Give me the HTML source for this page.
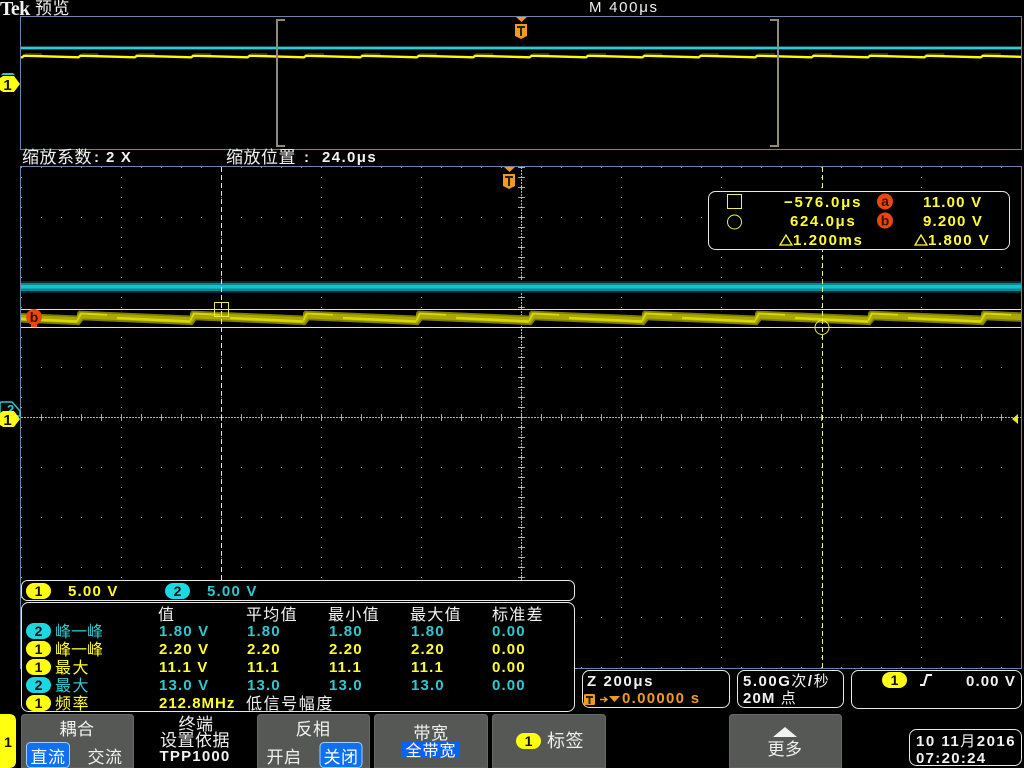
<!DOCTYPE html>
<html><head><meta charset="utf-8"><style>
html,body{margin:0;padding:0;background:#000;width:1024px;height:768px;overflow:hidden}
svg{display:block;position:absolute;left:0;top:0}
text{font-family:"Liberation Sans","WenQuanYi Zen Hei","Noto Sans CJK SC",sans-serif;font-size:15px;font-weight:bold;letter-spacing:1.15px;white-space:pre}
.w{fill:#f2f2f2}.y{fill:#ffff30}.c{fill:#30c8d0}.o{fill:#f09a20}
.z{font-size:16px;letter-spacing:0.5px;font-weight:normal}
.m{font-size:17px;letter-spacing:0.5px;fill:#f0f0f0;font-weight:normal}
.n{font-size:14px;font-weight:bold;fill:#111;letter-spacing:0;text-anchor:middle}
.p{fill:#000;stroke:#e8e8e8;stroke-width:1}
.btn{fill:#565856;stroke:#686a68;stroke-width:1}
</style></head><body>
<svg width="1024" height="768" viewBox="0 0 1024 768" xmlns="http://www.w3.org/2000/svg">
<defs>
<pattern id="rowd" patternUnits="userSpaceOnUse" x="21" y="167" width="20" height="50"><rect width="1" height="1" fill="#a0a0a0"/></pattern>
<pattern id="cold" patternUnits="userSpaceOnUse" x="21" y="167" width="100" height="10"><rect width="1" height="1" fill="#a0a0a0"/></pattern>
<pattern id="cenh" patternUnits="userSpaceOnUse" x="21" y="414" width="20" height="7"><rect x="0" width="1" height="7" fill="#a8a8a8"/></pattern>
<pattern id="cenv" patternUnits="userSpaceOnUse" x="518" y="167" width="7" height="10"><rect width="2" height="1" fill="#a0a0a0"/><rect x="5" width="2" height="1" fill="#a0a0a0"/><rect x="2" width="3" height="1" fill="#b8b8b8"/></pattern>
<pattern id="saw" patternUnits="userSpaceOnUse" x="-36" y="300" width="113" height="40">
<path d="M-6,20.5 L0,20.5 L4,15.5 L119,20.5" fill="none" stroke="#7d7d00" stroke-width="9.5"/>
<path d="M-6,20.5 L0,20.5 L4,15.5 L119,20.5" fill="none" stroke="#a8a800" stroke-width="6"/>
<path d="M0,21 L4,13.5 L30,14.8" fill="none" stroke="#d8d800" stroke-width="1.8"/>
<path d="M40,18 L113,21.5" fill="none" stroke="#d8d800" stroke-width="2.6"/>
</pattern>
<pattern id="saw2" patternUnits="userSpaceOnUse" x="22" y="50" width="56.4" height="12">
<path d="M-3,7.4 L0,7.4 L2,5.7 L59,7.4" fill="none" stroke="#ffff00" stroke-width="2.3"/>
<path d="M3,4 L20,4" fill="none" stroke="#4a4a00" stroke-width="1.5"/>
</pattern>
</defs>

<rect width="1024" height="768" fill="#000"/>

<!-- header -->
<text x="0" y="15" style="font-family:'Liberation Serif',serif;font-size:20px;font-weight:bold;letter-spacing:-0.6px" class="w">Tek</text>
<text x="35" y="14" class="z w" style="font-size:17px">预览</text>
<text x="589" y="12" class="w" style="letter-spacing:1.7px;font-weight:normal">M 400μs</text>

<!-- overview -->
<rect x="20.5" y="16.5" width="1001" height="133" fill="#000" stroke="#6c84a8"/>
<rect x="21" y="46" width="1000" height="4" fill="#0a5056"/>
<rect x="21" y="47" width="1000" height="2" fill="#25d0d8"/>
<rect x="21" y="50" width="1000" height="12" fill="url(#saw2)"/>
<path d="M285,20 H277 V146 H285" fill="none" stroke="#8f8a7a" stroke-width="2"/>
<path d="M770,20 H778 V146 H770" fill="none" stroke="#8f8a7a" stroke-width="2"/>
<path d="M516,17 H527 L521.5,22 Z" fill="#f09a20"/>
<path d="M515,24 H527 V36 L521,39 L515,36 Z" fill="#f09a20"/>
<path d="M517,26 H525 V28 H522 V36 H520 V28 H517 Z" fill="#222"/>

<!-- zoom labels -->
<text x="22" y="163" class="z w" style="font-size:17px">缩放系数</text>
<text x="94" y="162" class="w">:</text>
<text x="106" y="162" class="w" style="letter-spacing:1.2px">2 X</text>
<text x="226" y="163" class="z w" style="font-size:17px">缩放位置</text>
<text x="304" y="162" class="w">:</text>
<text x="322" y="162" class="w" style="letter-spacing:1.4px">24.0μs</text>

<!-- main graticule -->
<line x1="21" y1="166.5" x2="1022" y2="166.5" stroke="#6c84a8"/>
<line x1="20.5" y1="166" x2="20.5" y2="669" stroke="#6c84a8"/>
<line x1="1021.5" y1="166" x2="1021.5" y2="669" stroke="#6c84a8"/>
<line x1="575" y1="668.5" x2="1022" y2="668.5" stroke="#6c84a8"/>
<rect x="21" y="167" width="1000" height="501" fill="url(#rowd)"/>
<rect x="21" y="167" width="1000" height="501" fill="url(#cold)"/>
<rect x="22" y="167" width="1" height="501" fill="url(#cold)"/>
<line x1="21" y1="417.5" x2="1021" y2="417.5" stroke="#b0b0b0" stroke-dasharray="2 1"/>
<rect x="22" y="414" width="999" height="7" fill="url(#cenh)"/>
<line x1="521.5" y1="167" x2="521.5" y2="668" stroke="#b0b0b0" stroke-dasharray="2 1"/>
<rect x="518" y="167" width="7" height="501" fill="url(#cenv)"/>

<!-- blue trace -->
<rect x="21" y="281" width="1000" height="12" fill="#062a2e"/>
<rect x="21" y="283" width="1000" height="8" fill="#078a94"/>
<rect x="21" y="285" width="1000" height="3.5" fill="#10c4cc"/>
<!-- yellow trace -->
<rect x="21" y="305" width="1000" height="25" fill="url(#saw)"/>

<!-- cursors -->
<line x1="221.5" y1="167" x2="221.5" y2="580" stroke="#f0f080" stroke-dasharray="5 3"/>
<line x1="822.5" y1="167" x2="822.5" y2="668" stroke="#f0f080" stroke-dasharray="5 3"/>
<line x1="21" y1="309.5" x2="1021" y2="309.5" stroke="#f0f070"/>
<line x1="21" y1="327.5" x2="1021" y2="327.5" stroke="#f0f070"/>
<rect x="214.5" y="302.5" width="14" height="14" fill="none" stroke="#e8e850"/>
<circle cx="822" cy="327.5" r="7" fill="none" stroke="#e8e850"/>

<!-- T marker main -->
<path d="M504,167 H515 L509.5,172 Z" fill="#f09a20"/>
<path d="M503,174 H515 V186 L509,189 L503,186 Z" fill="#f09a20"/>
<path d="M505,176 H513 V178 H510 V186 H508 V178 H505 Z" fill="#222"/>

<!-- channel markers -->
<path d="M3,73 H13 L15,75 H1 Z" fill="#25c8d0"/>
<path d="M3,76 H14 L20,84 L14,92 H3 L0,90 V78 Z" fill="#ffff10"/>
<text x="7.5" y="90" class="n" style="font-size:15px">1</text>
<path d="M1,402 H12 L20,411 V416 H0 V403 Z" fill="none" stroke="#25c8d0" stroke-width="1.5"/>
<text x="7" y="414" class="c" style="font-size:13px;letter-spacing:0">2</text>
<path d="M3,411 H14 L20,419 L14,427 H3 L0,425 V413 Z" fill="#ffff10"/>
<text x="7.5" y="425" class="n" style="font-size:15px">1</text>
<path d="M1018,414 V424 L1012,419 Z" fill="#e8e820"/>

<!-- b marker -->
<circle cx="34" cy="317" r="8" fill="#e8480f"/>
<rect x="31" y="323" width="6" height="4" fill="#e8480f"/>
<text x="34" y="322" text-anchor="middle" style="font-size:14px;font-weight:bold;fill:#3a1000;letter-spacing:0">b</text>

<!-- readout -->
<rect x="708.5" y="191.5" width="301" height="58" rx="7" class="p"/>
<rect x="727.5" y="194.5" width="14" height="14" fill="none" stroke="#f0f050"/>
<circle cx="734.5" cy="222" r="7" fill="none" stroke="#f0f050"/>
<text x="784" y="207" class="y" style="letter-spacing:1.8px">−576.0μs</text>
<text x="790" y="226" class="y" style="letter-spacing:1.6px">624.0μs</text>
<path d="M780,245 L786,235 L792,245 Z" fill="none" stroke="#ffff30" stroke-width="1.3"/>
<text x="793" y="245" class="y" style="letter-spacing:1.6px">1.200ms</text>
<circle cx="885" cy="201.5" r="8" fill="#e8480f"/>
<text x="885" y="206" text-anchor="middle" style="font-size:14px;font-weight:bold;fill:#3a1000;letter-spacing:0">a</text>
<circle cx="885" cy="220.5" r="8" fill="#e8480f"/>
<text x="885" y="225.5" text-anchor="middle" style="font-size:14px;font-weight:bold;fill:#3a1000;letter-spacing:0">b</text>
<text x="923" y="207" class="y" style="letter-spacing:1.2px">11.00 V</text>
<text x="923" y="226" class="y" style="letter-spacing:1.2px">9.200 V</text>
<path d="M915,245 L921,235 L927,245 Z" fill="none" stroke="#ffff30" stroke-width="1.3"/>
<text x="928" y="245" class="y" style="letter-spacing:1.5px">1.800 V</text>

<!-- channel bar -->
<rect x="21.5" y="580.5" width="553" height="20" rx="6" class="p"/>
<rect x="26" y="583" width="25" height="16" rx="8" fill="#ffff10"/>
<text x="38.5" y="596" class="n">1</text>
<text x="68" y="596" class="y" style="letter-spacing:1.2px">5.00 V</text>
<rect x="165" y="583" width="25" height="16" rx="8" fill="#1cd8e0"/>
<text x="177.5" y="596" class="n">2</text>
<text x="207" y="596" class="c" style="letter-spacing:1.2px">5.00 V</text>

<!-- measurement -->
<rect x="21.5" y="602.5" width="553" height="109" rx="7" class="p"/>
<text x="158" y="620" class="z w">值</text>
<text x="246" y="620" class="z w" style="letter-spacing:1.3px">平均值</text>
<text x="328" y="620" class="z w" style="letter-spacing:1.3px">最小值</text>
<text x="410" y="620" class="z w" style="letter-spacing:1.3px">最大值</text>
<text x="492" y="620" class="z w" style="letter-spacing:1.3px">标准差</text>

<rect x="26" y="623" width="25" height="16" rx="8" fill="#1cd8e0"/><text x="38.5" y="636" class="n">2</text>
<rect x="26" y="641" width="25" height="16" rx="8" fill="#ffff10"/><text x="38.5" y="654" class="n">1</text>
<rect x="26" y="659" width="25" height="16" rx="8" fill="#ffff10"/><text x="38.5" y="672" class="n">1</text>
<rect x="26" y="677" width="25" height="16" rx="8" fill="#1cd8e0"/><text x="38.5" y="690" class="n">2</text>
<rect x="26" y="695" width="25" height="16" rx="8" fill="#ffff10"/><text x="38.5" y="708" class="n">1</text>

<text x="55" y="637" class="z c" style="letter-spacing:0">峰一峰</text>
<text x="55" y="655" class="z y" style="letter-spacing:0">峰一峰</text>
<text x="55" y="673" class="z y" style="letter-spacing:1.5px">最大</text>
<text x="55" y="691" class="z c" style="letter-spacing:1.5px">最大</text>
<text x="55" y="709" class="z y" style="letter-spacing:1.5px">频率</text>

<text x="159" y="636" class="c">1.80 V</text><text x="247" y="636" class="c">1.80</text><text x="329" y="636" class="c">1.80</text><text x="411" y="636" class="c">1.80</text><text x="492" y="636" class="c">0.00</text>
<text x="159" y="654" class="y">2.20 V</text><text x="247" y="654" class="y">2.20</text><text x="329" y="654" class="y">2.20</text><text x="411" y="654" class="y">2.20</text><text x="492" y="654" class="y">0.00</text>
<text x="159" y="672" class="y">11.1 V</text><text x="247" y="672" class="y">11.1</text><text x="329" y="672" class="y">11.1</text><text x="411" y="672" class="y">11.1</text><text x="492" y="672" class="y">0.00</text>
<text x="159" y="690" class="c">13.0 V</text><text x="247" y="690" class="c">13.0</text><text x="329" y="690" class="c">13.0</text><text x="411" y="690" class="c">13.0</text><text x="492" y="690" class="c">0.00</text>
<text x="159" y="708" class="y" style="letter-spacing:1px">212.8MHz</text>
<text x="246" y="709" class="z w" style="letter-spacing:1.6px">低信号幅度</text>

<!-- timebase panels -->
<rect x="582.5" y="670.5" width="147" height="37" rx="7" class="p"/>
<text x="587" y="686" class="w" style="letter-spacing:1.6px">Z 200μs</text>
<rect x="584" y="694" width="11" height="11" rx="1.5" fill="#f09a20"/>
<path d="M586,696 H593 V698 H590.5 V704 H588.5 V698 H586 Z" fill="#222"/>
<path d="M600,699.5 H606 M604,697 L607,699.5 L604,702" fill="none" stroke="#f09a20" stroke-width="1.4"/>
<path d="M609,696 H620 L614.5,702 Z" fill="#f09a20"/>
<text x="622" y="703" class="o" style="letter-spacing:1.3px">0.00000 s</text>

<rect x="737.5" y="670.5" width="106" height="37" rx="7" class="p"/>
<text x="743" y="686" class="w" style="letter-spacing:1.5px">5.00G<tspan style="font-weight:normal">次</tspan>/<tspan style="font-weight:normal">秒</tspan></text>
<text x="743" y="703" class="w" style="letter-spacing:1.1px">20M <tspan style="font-weight:normal">点</tspan></text>

<rect x="851.5" y="670.5" width="170" height="38" rx="7" class="p"/>
<rect x="882" y="672" width="25" height="16" rx="8" fill="#ffff10"/>
<text x="894.5" y="685" class="n">1</text>
<path d="M920,685 H924 L927,675 H932" fill="none" stroke="#f4f4f4" stroke-width="2"/>
<text x="966" y="686" class="w" style="letter-spacing:1.1px">0.00 V</text>

<!-- bottom tab -->
<path d="M0,714 H9 Q16,714 16,721 V761 Q16,768 9,768 H0 Z" fill="#ffff10"/>
<text x="8" y="747" class="n">1</text>

<!-- buttons -->
<path d="M21.5,768 V718 Q21.5,714.5 25,714.5 H130 Q133.5,714.5 133.5,718 V768 Z" class="btn"/>
<text x="77" y="735" text-anchor="middle" class="m">耦合</text>
<rect x="26.5" y="742.5" width="43" height="25" rx="4" fill="#1070f0" stroke="#a0d0ff"/>
<text x="48" y="763" text-anchor="middle" class="m" style="fill:#fff">直流</text>
<text x="105" y="763" text-anchor="middle" class="m">交流</text>

<text x="196" y="730" text-anchor="middle" class="m">终端</text>
<text x="195" y="746" text-anchor="middle" class="m">设置依据</text>
<text x="195" y="761" text-anchor="middle" class="w" style="letter-spacing:1.2px">TPP1000</text>

<path d="M257.5,768 V718 Q257.5,714.5 261,714.5 H366 Q369.5,714.5 369.5,718 V768 Z" class="btn"/>
<text x="313" y="735" text-anchor="middle" class="m">反相</text>
<text x="284" y="763" text-anchor="middle" class="m">开启</text>
<rect x="320" y="742.5" width="42" height="25" rx="4" fill="#1070f0" stroke="#a0d0ff"/>
<text x="341" y="763" text-anchor="middle" class="m" style="fill:#fff">关闭</text>

<path d="M374.5,768 V718 Q374.5,714.5 378,714.5 H484 Q487.5,714.5 487.5,718 V768 Z" class="btn"/>
<text x="431" y="739" text-anchor="middle" class="m">带宽</text>
<rect x="402" y="742" width="58" height="16" fill="#0a62f0"/>
<text x="431" y="756" text-anchor="middle" class="z" style="fill:#fff;letter-spacing:1px">全带宽</text>

<path d="M492.5,768 V718 Q492.5,714.5 496,714.5 H602 Q605.5,714.5 605.5,718 V768 Z" class="btn"/>
<rect x="516" y="733" width="25" height="16" rx="8" fill="#ffff10"/>
<text x="528.5" y="746" class="n">1</text>
<text x="547" y="747" class="m" style="font-size:18px">标签</text>

<path d="M729.5,768 V718 Q729.5,714.5 733,714.5 H838 Q841.5,714.5 841.5,718 V768 Z" class="btn"/>
<path d="M773,737 L785,727 L797,737 Z" fill="#f2f2f2"/>
<text x="785" y="755" text-anchor="middle" class="m">更多</text>

<!-- date -->
<rect x="909.5" y="729.5" width="112" height="36" rx="7" class="p"/>
<text x="916" y="746" class="w" style="letter-spacing:1.5px">10 11<tspan style="font-weight:normal">月</tspan>2016</text>
<text x="916" y="763" class="w" style="letter-spacing:1.3px">07:20:24</text>
</svg>
</body></html>
